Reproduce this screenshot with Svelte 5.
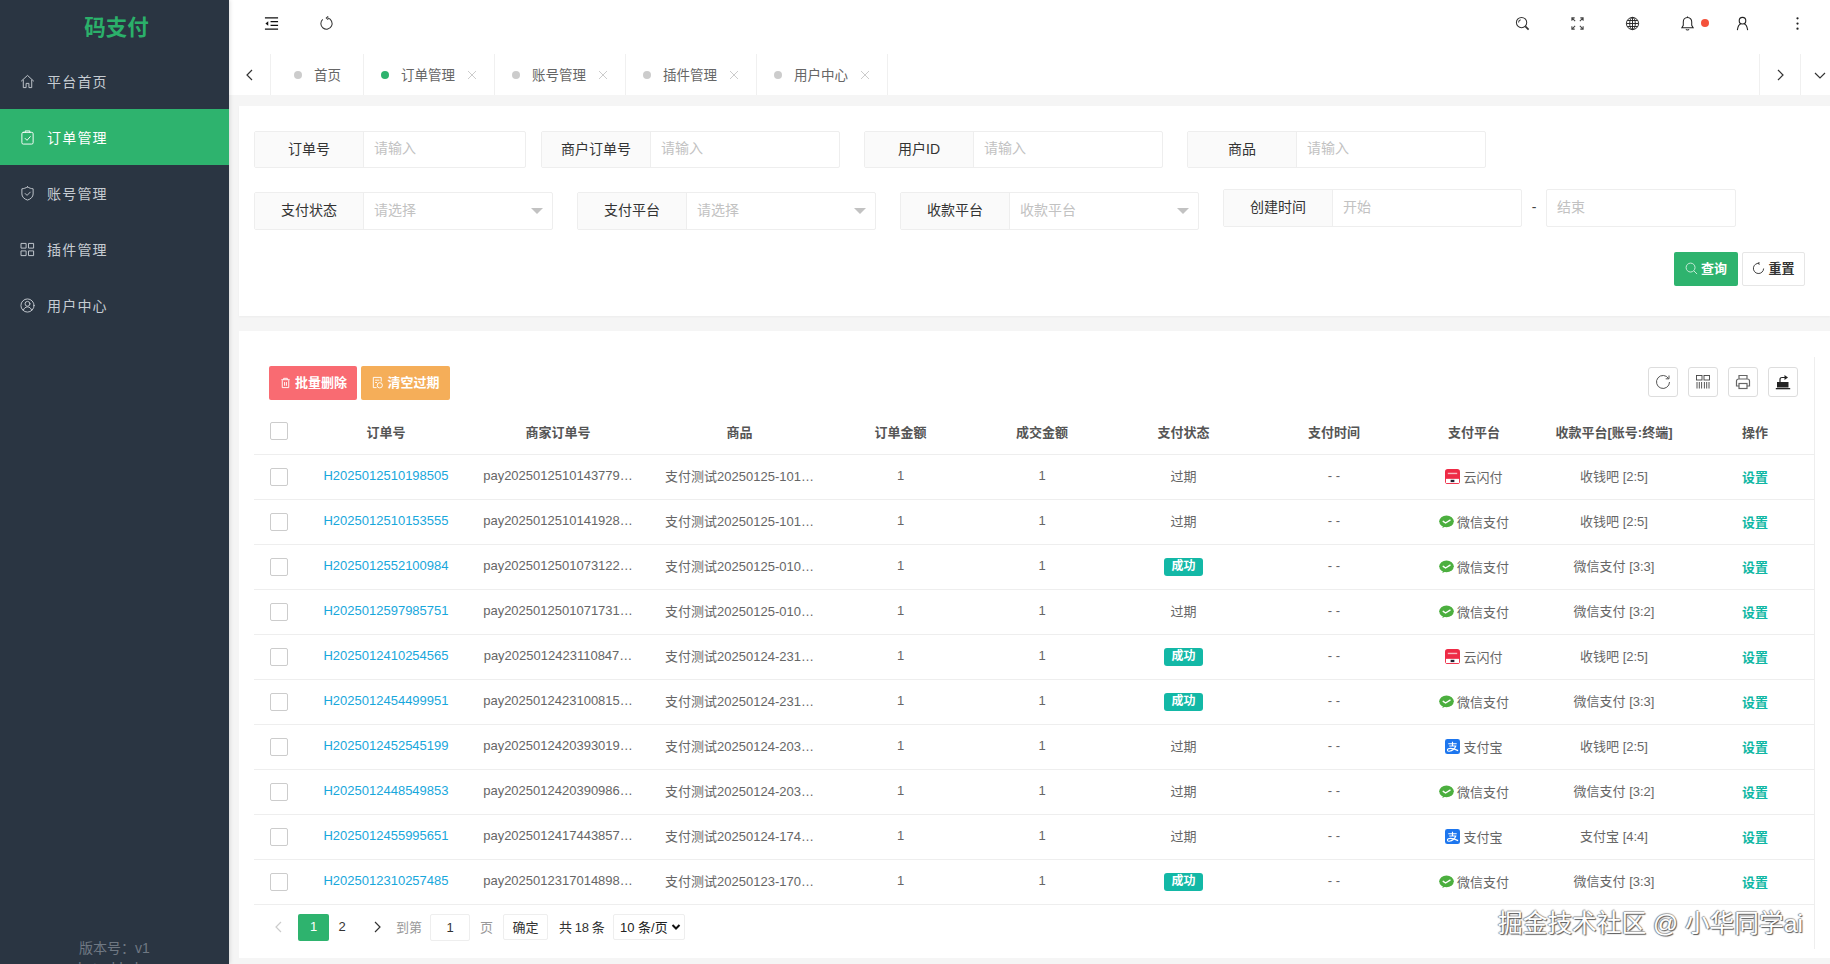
<script>
  const menu = [
    { name: '平台首页', icon: 'home' },
    { name: '订单管理', icon: 'order', active: true },
    { name: '账号管理', icon: 'shield' },
    { name: '插件管理', icon: 'grid' },
    { name: '用户中心', icon: 'user' }
  ];
  const tabs = [
    { name: '首页', home: true },
    { name: '订单管理', on: true },
    { name: '账号管理' },
    { name: '插件管理' },
    { name: '用户中心' }
  ];
  const topRow = [
    { label: '订单号', ph: '请输入', w: 272 },
    { label: '商户订单号', ph: '请输入', w: 299 },
    { label: '用户ID', ph: '请输入', w: 299 },
    { label: '商品', ph: '请输入', w: 299 }
  ];
  const selects = [
    { label: '支付状态', ph: '请选择' },
    { label: '支付平台', ph: '请选择' },
    { label: '收款平台', ph: '收款平台' }
  ];
  const heads = ['订单号', '商家订单号', '商品', '订单金额', '成交金额', '支付状态', '支付时间', '支付平台', '收款平台[账号:终端]', '操作'];
  const platforms = { y: '云闪付', w: '微信支付', a: '支付宝' };
  const rows = [
    ['H2025012510198505', 'pay2025012510143779…', '支付测试20250125-101…', 0, 'y', '收钱吧 [2:5]'],
    ['H2025012510153555', 'pay2025012510141928…', '支付测试20250125-101…', 0, 'w', '收钱吧 [2:5]'],
    ['H2025012552100984', 'pay2025012501073122…', '支付测试20250125-010…', 1, 'w', '微信支付 [3:3]'],
    ['H2025012597985751', 'pay2025012501071731…', '支付测试20250125-010…', 0, 'w', '微信支付 [3:2]'],
    ['H2025012410254565', 'pay2025012423110847…', '支付测试20250124-231…', 1, 'y', '收钱吧 [2:5]'],
    ['H2025012454499951', 'pay2025012423100815…', '支付测试20250124-231…', 1, 'w', '微信支付 [3:3]'],
    ['H2025012452545199', 'pay2025012420393019…', '支付测试20250124-203…', 0, 'a', '收钱吧 [2:5]'],
    ['H2025012448549853', 'pay2025012420390986…', '支付测试20250124-203…', 0, 'w', '微信支付 [3:2]'],
    ['H2025012455995651', 'pay2025012417443857…', '支付测试20250124-174…', 0, 'a', '支付宝 [4:4]'],
    ['H2025012310257485', 'pay2025012317014898…', '支付测试20250123-170…', 1, 'w', '微信支付 [3:3]']
  ];
</script>

{#snippet menuIcon(kind)}
  <svg class="micon" viewBox="0 0 16 16" fill="none" stroke="currentColor" stroke-width="1" stroke-linejoin="round" stroke-linecap="round">
    {#if kind === 'home'}
      <path d="M1.5 7.5 8 1.5l6.5 6M3.5 6.5v8h3v-4.500h3v4.500h3v-8" />
    {:else if kind === 'order'}
      <rect x="2" y="2.500" width="12" height="12.500" rx="1.500" /><path d="M5.500 2.500V1h5v1.500M5.500 9l2 2 3.500-4" />
    {:else if kind === 'shield'}
      <path d="M8 1c2 1.300 4 1.800 6 2v5.500c0 3-2.500 5.500-6 6.500-3.500-1-6-3.500-6-6.500V3c2-.2 4-.7 6-2Z" /><path d="m5.500 8 2 2 3.500-3.500" />
    {:else if kind === 'grid'}
      <rect x="1.500" y="1.500" width="5" height="5" /><rect x="9.500" y="1.500" width="5" height="5" /><rect x="1.500" y="9.500" width="5" height="5" /><rect x="9.500" y="9.500" width="5" height="5" />
    {:else}
      <circle cx="8" cy="8" r="7" /><circle cx="8" cy="6.200" r="2.600" /><path d="M3.500 13c.8-2.200 2.500-3.500 4.500-3.500s3.700 1.300 4.500 3.500" />
    {/if}
  </svg>
{/snippet}

{#snippet brand(kind)}
  {#if kind === 'y'}
    <svg class="brand" viewBox="0 0 16 16"><rect width="16" height="16" rx="3" fill="#ee2a45" /><rect x="1" y="10.500" width="14" height="4.500" fill="#fff" /><rect x="6" y="11.500" width="4" height="2.500" fill="#223" /><rect x="3" y="4" width="10" height="1.500" fill="#f9b7c0" /></svg>
  {:else if kind === 'w'}
    <svg class="brand" viewBox="0 0 16 16"><ellipse cx="8" cy="7.800" rx="7.800" ry="6.300" fill="#4caf3f" /><path d="m3.500 14.800 1-3 2.500 1.500Z" fill="#4caf3f" /><path d="m4.500 7.800 2.500 1.800 4.800-3" fill="none" stroke="#fff" stroke-width="1.500" stroke-linecap="round" stroke-linejoin="round" /></svg>
  {:else}
    <svg class="brand" viewBox="0 0 16 16"><rect width="16" height="16" rx="2.500" fill="#1d76ee" /><path d="M3.500 5h9M8 2.800V7M4.500 7.500h7c-1 3-3.500 5-7 5.500-2 .2-2.600-1.800-1-2.600 2.500-1 6-.2 10.500 2" fill="none" stroke="#fff" stroke-width="1.200" /></svg>
  {/if}
{/snippet}

{#snippet chev(d)}
  <svg class="chev" viewBox="0 0 14 14" fill="none" stroke="currentColor" stroke-width="1.200"><path d={d} /></svg>
{/snippet}

<div class="app">
  <aside class="side">
    <div class="logo">码支付</div>
    <nav>
      {#each menu as m}
        <div class="mitem" class:active={m.active}>
          {@render menuIcon(m.icon)}
          <span>{m.name}</span>
        </div>
      {/each}
    </nav>
    <div class="ver">
      <div>版本号：v1</div>
      <div>bytechbaba</div>
    </div>
  </aside>

  <main class="main">
    <header class="top">
      <button class="tbtn" aria-label="收起菜单">
        <svg viewBox="0 0 16 16" fill="none" stroke="#111" stroke-width="1.400"><path d="M1 2h14M7 6h8M7 10h8M1 14h14" /><path d="M4.500 5.500 1.500 8l3 2.500Z" fill="#111" stroke="none" /></svg>
      </button>
      <button class="tbtn" aria-label="刷新">
        <svg viewBox="0 0 16 16" fill="none" stroke="#333" stroke-width="1.100"><path d="M9.500 2.200A6 6 0 1 1 4 3.500" /><path d="M9.800 .5 7.800 2.200l2 1.600" /></svg>
      </button>
      <div class="spacer"></div>
      <button class="tbtn" aria-label="搜索">
        <svg viewBox="0 0 16 16" fill="none" stroke="#333" stroke-width="1.100"><circle cx="7" cy="7" r="5.500" /><path d="M3.800 7A3.200 3.200 0 0 1 6 4" /><path d="m11 11 3.500 3.500" stroke-width="1.800" /></svg>
      </button>
      <button class="tbtn" aria-label="全屏">
        <svg viewBox="0 0 16 16" fill="none" stroke="#444" stroke-width="1.100"><path d="M5 2H2v3M2 2l3.500 3.500M11 2h3v3M14 2l-3.500 3.500M5 14H2v-3M2 14l3.500-3.500M11 14h3v-3M14 14l-3.500-3.500" /></svg>
      </button>
      <button class="tbtn" aria-label="语言">
        <svg viewBox="0 0 16 16" fill="none" stroke="#222" stroke-width="1"><circle cx="8" cy="8" r="6.500" /><ellipse cx="8" cy="8" rx="3" ry="6.500" /><path d="M8 1.500v13M1.500 8h13M2.500 4.800h11M2.500 11.200h11" /></svg>
      </button>
      <button class="tbtn bell" aria-label="通知">
        <svg viewBox="0 0 16 16" fill="none" stroke="#222" stroke-width="1.100"><path d="M8 1.500c-3 0-4.500 2.300-4.500 5v3.500L2 12.500h12L12.500 10V6.500c0-2.700-1.500-5-4.500-5Z" /><path d="M6.300 14.200c.8.800 2.600.8 3.400 0M8 .5v1" /></svg>
        <i class="dot"></i>
      </button>
      <button class="tbtn" aria-label="用户">
        <svg viewBox="0 0 16 16" fill="none" stroke="#222" stroke-width="1.200"><circle cx="8" cy="5" r="3.500" /><path d="M2.500 15c.5-3.700 2.500-6.500 4-6.800M13.500 15c-.5-3.700-2.500-6.500-4-6.800" /></svg>
      </button>
      <button class="tbtn" aria-label="更多">
        <svg viewBox="0 0 16 16" fill="#222"><circle cx="8" cy="2.500" r="1.200" /><circle cx="8" cy="8" r="1.200" /><circle cx="8" cy="13.500" r="1.200" /></svg>
      </button>
    </header>

    <div class="tabs">
      <div class="tside left">{@render chev('M9 2 4 7l5 5')}</div>
      {#each tabs as t}
        <div class="tab" class:home={t.home}>
          <i class="tdot" class:on={t.on}></i>
          <span>{t.name}</span>
          {#if !t.home}
            <svg class="tx" viewBox="0 0 10 10" stroke="#ccc" stroke-width="1" fill="none"><path d="m1 1 8 8M9 1 1 9" /></svg>
          {/if}
        </div>
      {/each}
      <div class="spacer"></div>
      <div class="tside nextb">{@render chev('m5 2 5 5-5 5')}</div>
      <div class="tside down">{@render chev('m2 5 5 5 5-5')}</div>
    </div>

    <section class="card search">
      <div class="frow r1">
        {#each topRow as f}
          <div class="field" style="width:{f.w}px">
            <label class="lab" for={f.label}>{f.label}</label>
            <input id={f.label} placeholder={f.ph} />
          </div>
        {/each}
      </div>
      <div class="frow r2">
        {#each selects as s}
          <div class="field sel">
            <span class="lab">{s.label}</span>
            <span class="val">{s.ph}</span>
            <i class="caret"></i>
          </div>
        {/each}
        <div class="date">
          <div class="field sel">
            <span class="lab">创建时间</span>
            <span class="val">开始</span>
          </div>
          <span class="dash">-</span>
          <div class="endbox">结束</div>
        </div>
      </div>
      <div class="actions">
        <button class="btn primary">
          <svg viewBox="0 0 14 14" fill="none" stroke="#cfeedd" stroke-width="1"><circle cx="6" cy="6" r="4.800" /><path d="m9.500 9.500 3.500 3.500" /></svg>
          查询
        </button>
        <button class="btn plain">
          <svg viewBox="0 0 14 14" fill="none" stroke="#333" stroke-width="1"><path d="M8 1.500A5.500 5.500 0 1 0 12.500 7" /><path d="M8 0 6.500 1.500 8 3" /></svg>
          重置
        </button>
      </div>
    </section>

    <section class="card list">
      <div class="wrap">
        <div class="toolbar">
          <button class="btn danger">
            <svg viewBox="0 0 14 14" fill="none" stroke="#fff" stroke-width="1"><path d="M2.500 4h9M5 4V2.500h4V4M3.500 4.500v8h7v-8M6 6.500v4M8 6.500v4" /></svg>
            批量删除
          </button>
          <button class="btn warn">
            <svg viewBox="0 0 14 14" fill="none" stroke="#fff" stroke-width="1"><path d="M11 6V1.500H2.500v11H6" /><circle cx="9.500" cy="10" r="2.800" /><path d="M4.500 4.500h4.500M4.500 7h2" /></svg>
            清空过期
          </button>
          <div class="spacer"></div>
          <div class="tools">
            <button class="tool" aria-label="刷新">
              <svg viewBox="0 0 16 16" fill="none" stroke="#555" stroke-width="1"><path d="M13.500 4.500A6.500 6.500 0 1 0 14.500 8" /><path d="M14 1.500v3.300h-3.300" /></svg>
            </button>
            <button class="tool" aria-label="列">
              <svg viewBox="0 0 16 16" fill="none" stroke="#444" stroke-width=".9"><rect x="1.500" y="1.500" width="5.500" height="4.500" /><rect x="9" y="1.500" width="5.500" height="4.500" /><path d="M2 8v6.500M4.300 8v6.500M6.600 8v6.500M9.400 8v6.500M11.700 8v6.500M14 8v6.500" /></svg>
            </button>
            <button class="tool" aria-label="打印">
              <svg viewBox="0 0 16 16" fill="none" stroke="#666" stroke-width="1.200"><path d="M4 5V1.500h8V5M4 12H1.500V7a2 2 0 0 1 2-2h9a2 2 0 0 1 2 2v5H12" /><rect x="4" y="9.500" width="8" height="5" /></svg>
            </button>
            <button class="tool" aria-label="导出">
              <svg viewBox="0 0 16 16"><path d="M2 8h11.500v5.500H2Z" fill="#222" /><path d="M.8 14h14.400v1.300H.8Z" fill="#222" /><path d="M5 8V5.500c0-1.200 1-2 2-2h4" fill="none" stroke="#222" stroke-width="1.200" /><path d="m9.500 1 3.500 2.500L9.500 6Z" fill="#222" /></svg>
            </button>
          </div>
        </div>

        <table>
          <colgroup>
            <col style="width:51px" /><col style="width:162px" /><col style="width:182px" /><col style="width:181px" /><col style="width:141px" /><col style="width:142px" /><col style="width:141px" /><col style="width:160px" /><col style="width:120px" /><col style="width:160px" /><col />
          </colgroup>
          <thead>
            <tr>
              <th class="cbcell"><i class="cb"></i></th>
              {#each heads as h}<th>{h}</th>{/each}
            </tr>
          </thead>
          <tbody>
            {#each rows as r}
              <tr>
                <td class="cbcell"><i class="cb"></i></td>
                <td class="link">{r[0]}</td>
                <td>{r[1]}</td>
                <td>{r[2]}</td>
                <td>1</td>
                <td>1</td>
                <td>{#if r[3]}<span class="ok">成功</span>{:else}过期{/if}</td>
                <td>- -</td>
                <td><span class="plat">{@render brand(r[4])}{platforms[r[4]]}</span></td>
                <td>{r[5]}</td>
                <td class="set">设置</td>
              </tr>
            {/each}
          </tbody>
        </table>

        <div class="pager">
          <span class="arrow off">{@render chev('M9 2 4 7l5 5')}</span>
          <span class="page cur">1</span>
          <span class="page">2</span>
          <span class="arrow">{@render chev('m5 2 5 5-5 5')}</span>
          <span class="muted first">到第</span>
          <span class="pinput">1</span>
          <span class="muted">页</span>
          <span class="confirm">确定</span>
          <span class="total">共 18 条</span>
          <span class="psize">10 条/页
            <svg viewBox="0 0 10 10" fill="none" stroke="#111" stroke-width="2"><path d="m1.500 3 3.500 3.500L8.500 3" /></svg>
          </span>
        </div>
      </div>
    </section>
  </main>

  <div class="mark">掘金技术社区 @ 小华同学ai</div>
</div>

<style>
  :global(body) {
    margin: 0;
    background: #f5f5f5;
    font-family: "Liberation Sans", "Noto Sans CJK SC", sans-serif;
    overflow: hidden;
  }
  .app {
    display: flex;
    width: 1830px;
    height: 964px;
    overflow: hidden;
    position: relative;
    color: #666;
    font-size: 13px;
  }
  .side {
    width: 229px;
    flex: none;
    height: 964px;
    background: #2a3542;
    display: flex;
    flex-direction: column;
    box-shadow: 1px 0 4px rgba(0, 0, 0, .12);
    z-index: 1;
    overflow: hidden;
  }
  .logo {
    height: 53px;
    line-height: 56px;
    padding-left: 4px;
    text-align: center;
    color: #2bb06a;
    font-size: 21.500px;
    font-weight: 700;
  }
  .mitem {
    height: 56px;
    display: flex;
    align-items: center;
    padding-left: 20px;
    gap: 13px;
    color: #c6ccd2;
    font-size: 14px;
    letter-spacing: 1.2px;
  }
  .mitem.active {
    background: #2eb36e;
    color: #fff;
  }
  .micon {
    width: 15px;
    height: 15px;
    flex: none;
    overflow: visible;
    margin-right: -1px;
  }
  .ver {
    margin-top: auto;
    margin-bottom: -14px;
    text-align: center;
    color: #6f7883;
    font-size: 14px;
    line-height: 20px;
  }
  .main {
    flex: 1;
    min-width: 0;
    display: flex;
    flex-direction: column;
  }
  .top {
    height: 46px;
    padding-bottom: 8px;
    background: #fff;
    display: flex;
    padding-left: 15px;
    padding-right: 5px;
    border-bottom: 1px solid #f0f0f0;
    box-sizing: content-box;
    margin-bottom: -1px;
  }
  .spacer {
    flex: 1;
  }
  .tbtn {
    width: 55px;
    height: 46px;
    border: 0;
    background: none;
    padding: 0;
    display: flex;
    align-items: center;
    justify-content: center;
    position: relative;
  }
  .tbtn svg {
    width: 15px;
    height: 15px;
  }
  .dot {
    position: absolute;
    width: 8px;
    height: 8px;
    border-radius: 50%;
    background: #f4523b;
    left: 41px;
    top: 19px;
  }
  .tabs {
    height: 41px;
    background: #fff;
    display: flex;
    align-items: stretch;
    font-size: 13.500px;
    color: #666;
    white-space: nowrap;
  }
  .tside {
    display: flex;
    align-items: center;
    justify-content: center;
    color: #333;
    box-sizing: border-box;
  }
  .tside.left {
    width: 42px;
    border-right: 1px solid #f0f0f0;
  }
  .tside.nextb {
    width: 42px;
    border-left: 1px solid #f0f0f0;
    border-right: 1px solid #f0f0f0;
  }
  .tside.down {
    width: 29px;
    padding-left: 8px;
  }
  .chev {
    width: 14px;
    height: 14px;
    display: block;
  }
  .tab {
    display: flex;
    align-items: center;
    padding: 0 0 0 17px;
    border-right: 1px solid #f0f0f0;
    width: 131px;
    box-sizing: border-box;
  }
  .tab span {
    padding-bottom: 2px;
  }
  .tab.home {
    width: 93px;
    padding: 0 0 0 23px;
  }
  .tdot {
    width: 8px;
    height: 8px;
    border-radius: 50%;
    background: #ccc;
    margin-right: 12px;
    flex: none;
  }
  .tdot.on {
    background: #2eb36e;
  }
  .tx {
    width: 10px;
    height: 10px;
    margin-left: 12px;
    flex: none;
  }
  .card {
    background: #fff;
    margin-left: 10px;
  }
  .search {
    margin-top: 11px;
    height: 210px;
    padding: 25px 0 0 15px;
    box-sizing: border-box;
    box-shadow: 0 1px 2px rgba(0, 0, 0, .04);
  }
  .frow {
    display: flex;
    align-items: flex-start;
  }
  .r1 {
    gap: 24px;
    height: 37px;
  }
  .r1 .field:first-child {
    margin-right: -9px;
  }
  .r2 {
    margin-top: 24px;
    gap: 24px;
    height: 38px;
    position: relative;
  }
  .field {
    display: flex;
    height: 37px;
    box-sizing: border-box;
    border: 1px solid #eee;
    border-radius: 2px;
    font-size: 14px;
    position: relative;
  }
  .sel {
    width: 299px;
    height: 38px;
  }
  .lab {
    width: 109px;
    flex: none;
    box-sizing: border-box;
    background: #fafafa;
    border-right: 1px solid #eee;
    color: #333;
    display: flex;
    align-items: center;
    justify-content: center;
    padding-bottom: 3px;
  }
  .sel .lab {
    padding-bottom: 5px;
  }
  input {
    flex: 1;
    min-width: 0;
    border: 0;
    outline: 0;
    padding: 0 10px 3px;
    font: inherit;
    background: transparent;
  }
  input::placeholder {
    color: #c2c2c2;
    opacity: 1;
  }
  .val {
    padding: 0 0 5px 10px;
    color: #c2c2c2;
    align-self: center;
  }
  .caret {
    position: absolute;
    right: 9px;
    top: 15px;
    border: 6px solid transparent;
    border-top: 6px solid #c2c2c2;
    border-bottom: 0;
  }
  .date {
    display: flex;
    align-items: center;
    margin-top: -3px;
  }
  .dash {
    width: 24px;
    text-align: center;
    color: #444;
    font-size: 14px;
    padding-bottom: 2px;
  }
  .endbox {
    width: 190px;
    height: 38px;
    box-sizing: border-box;
    border: 1px solid #eee;
    border-radius: 2px;
    color: #c2c2c2;
    font-size: 14px;
    padding: 0 0 5px 10px;
    display: flex;
    align-items: center;
  }
  .actions {
    display: flex;
    justify-content: flex-end;
    gap: 4px;
    padding-right: 25px;
    margin-top: 22px;
  }
  .btn {
    height: 34px;
    border: 0;
    border-radius: 2px;
    font: inherit;
    font-size: 13px;
    font-weight: 700;
    display: flex;
    align-items: center;
    justify-content: center;
    gap: 3px;
    padding: 0 0 4px;
  }
  .btn svg {
    width: 13px;
    height: 13px;
    flex: none;
    margin-top: 3px;
  }
  .primary {
    width: 64px;
    background: #2eb36e;
    color: #fff;
  }
  .plain {
    width: 63px;
    background: #fff;
    border: 1px solid #e6e6e6;
    box-sizing: border-box;
    color: #333;
  }
  .list {
    margin-top: 15px;
    height: 627px;
    padding: 26px 15px 0;
    box-sizing: border-box;
  }
  .wrap {
    height: 592px;
    border-right: 1px solid #eee;
  }
  .toolbar {
    display: flex;
    gap: 4px;
    padding: 9px 16px 0 15px;
    height: 54px;
    box-sizing: border-box;
  }
  .danger {
    width: 88px;
    background: #f96b72;
    color: #fff;
  }
  .warn {
    width: 89px;
    background: #f5ae59;
    color: #fff;
  }
  .tools {
    display: flex;
    gap: 10px;
    padding-top: 1px;
  }
  .tool {
    width: 30px;
    height: 30px;
    padding: 0;
    border: 1px solid #ddd;
    border-radius: 3px;
    background: #fff;
    display: flex;
    align-items: center;
    justify-content: center;
  }
  .tool svg {
    width: 16px;
    height: 16px;
  }
  table {
    width: 100%;
    table-layout: fixed;
    border-collapse: collapse;
    font-size: 13px;
  }
  th {
    height: 43px;
    box-sizing: border-box;
    padding: 0 0 2px;
    color: #555;
    font-weight: 700;
    text-align: center;
    border-bottom: 1px solid #eee;
    white-space: nowrap;
  }
  td {
    height: 45px;
    box-sizing: border-box;
    padding: 0 0 2px;
    text-align: center;
    border-bottom: 1px solid #eee;
    white-space: nowrap;
    overflow: hidden;
    color: #666;
  }
  .cbcell {
    padding-right: 2px;
  }
  .cb {
    display: inline-block;
    width: 18px;
    height: 18px;
    box-sizing: border-box;
    border: 1px solid #ccc;
    border-radius: 2px;
    vertical-align: middle;
    background: #fff;
  }
  td .cb,
  td .ok {
    position: relative;
    top: 1px;
  }
  td.link {
    color: #18a7dc;
  }
  td.set {
    color: #10b7a4;
    font-weight: 700;
    padding: 0 0 1px 2px;
  }
  th:last-child {
    padding-left: 2px;
  }
  .ok {
    display: inline-block;
    width: 39px;
    height: 18px;
    line-height: 17px;
    border-radius: 3px;
    background: #13b8a6;
    color: #fff;
    font-size: 12px;
    font-weight: 700;
  }
  .plat {
    display: inline-flex;
    align-items: center;
    gap: 3px;
    position: relative;
    top: 1px;
  }
  .brand {
    width: 15px;
    height: 15px;
    flex: none;
  }
  .pager {
    height: 45px;
    display: flex;
    align-items: center;
    padding-left: 18px;
    color: #333;
    font-size: 13px;
    white-space: nowrap;
  }
  .arrow {
    width: 14px;
    color: #333;
    flex: none;
  }
  .arrow.off {
    color: #ccc;
    margin-right: 12px;
  }
  .page {
    width: 31px;
    height: 27px;
    line-height: 26px;
    text-align: center;
    border-radius: 2px;
  }
  .page.cur {
    background: #2eb36e;
    color: #fff;
  }
  .page:not(.cur) {
    margin-right: 15px;
    width: 26px;
  }
  .muted {
    color: #999;
    padding-bottom: 2px;
  }
  .first {
    margin-left: 12px;
    margin-right: 8px;
  }
  .pinput {
    width: 40px;
    height: 27px;
    line-height: 26px;
    box-sizing: border-box;
    text-align: center;
    border: 1px solid #eee;
    margin-right: 10px;
    border-radius: 2px;
  }
  .confirm {
    width: 45px;
    height: 26px;
    line-height: 25px;
    box-sizing: border-box;
    text-align: center;
    border: 1px solid #eee;
    margin-left: 10px;
    border-radius: 2px;
    font-weight: 400;
  }
  .total {
    margin-left: 11px;
    width: 44px;
    word-spacing: -1px;
    padding-bottom: 2px;
  }
  .psize {
    margin-left: 10px;
    width: 72px;
    height: 26px;
    box-sizing: border-box;
    border: 1px solid #eee;
    border-radius: 2px;
    display: inline-flex;
    align-items: center;
    justify-content: space-between;
    padding: 0 3px 2px 6px;
    color: #222;
  }
  .psize svg {
    width: 10px;
    height: 10px;
    margin-top: 2px;
  }
  .mark {
    position: absolute;
    left: 1498px;
    top: 908px;
    font-size: 24.700px;
    line-height: 32px;
    white-space: nowrap;
    color: #fff;
    letter-spacing: 0;
    text-shadow: 1px 1px 1px #555, -1px 0 1px #888, 0 -1px 1px #aaa;
  }
</style>
